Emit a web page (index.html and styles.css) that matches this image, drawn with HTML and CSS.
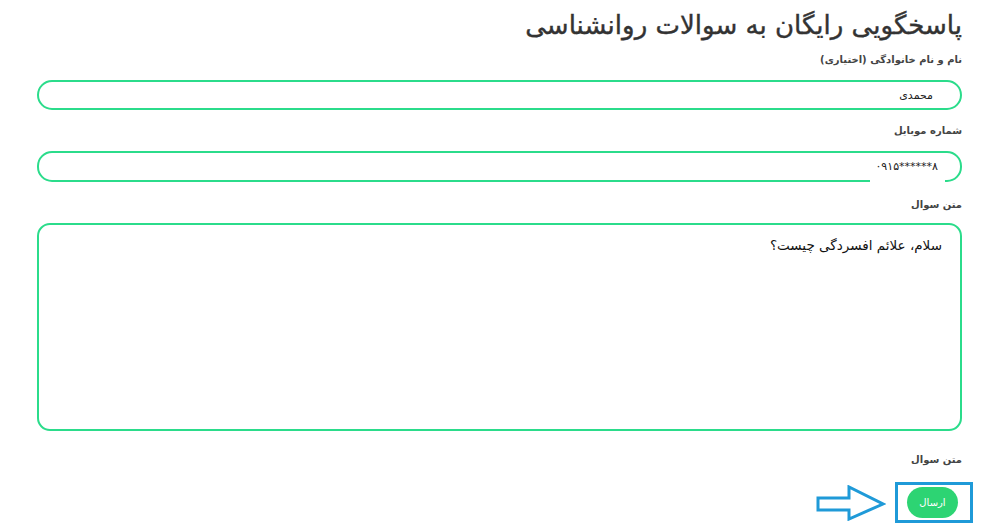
FILE: index.html
```html
<!DOCTYPE html>
<html lang="fa" dir="rtl">
<head>
<meta charset="utf-8">
<link rel="stylesheet" href="styles.css">
</head>
<body>
<form class="form">
  <h1 class="title">پاسخگویی رایگان به سوالات روانشناسی</h1>
  <label class="label">نام و نام خانوادگی (اختیاری)</label>
  <input class="field" type="text" value="محمدی">
  <label class="label label-gap">شماره موبایل</label>
  <div class="field-wrap">
    <input class="field field-tall field-ltr" type="text" dir="ltr" value="۰۹۱۵******۸">
    <span class="border-gap"></span>
  </div>
  <label class="label label-gap2">متن سوال</label>
  <textarea class="area">سلام، علائم افسردگی چیست؟</textarea>
  <label class="label label-gap3">متن سوال</label>
  <div class="actions">
    <div class="highlight"><button class="send" type="button">ارسال</button></div>
    <svg class="arrow" width="70" height="36" viewBox="0 0 70 36">
      <polygon points="2,13 33,13 33,2 67,19 33,34 33,25 2,25" fill="#fff" stroke="#1f9ad8" stroke-width="3" stroke-linejoin="miter"/>
    </svg>
  </div>
</form>
</body>
</html>
```

FILE: styles.css
```css
html, body {
  margin: 0;
  padding: 0;
  background: #fff;
}
body {
  font-family: "DejaVu Sans", "Liberation Sans", sans-serif;
  color: #333;
}
.form {
  display: flex;
  flex-direction: column;
  padding: 0 38px 0 37px;
}
.title {
  margin: 0;
  height: 50px;
  line-height: 50px;
  font-size: 26px;
  font-weight: 500;
  -webkit-text-stroke: 0.4px #333;
  color: #333;
  text-align: right;
}
.label {
  display: block;
  height: 20px;
  line-height: 20px;
  font-size: 10px;
  font-weight: bold;
  color: #444;
  margin-bottom: 10px;
}
.label-gap { margin-top: 11px; }
.label-gap2 { margin-top: 13px; margin-bottom: 8px; }
.label-gap3 { margin-top: 19px; margin-bottom: 12px; }
.field {
  box-sizing: border-box;
  display: block;
  width: 100%;
  height: 30px;
  margin: 0;
  border: 2px solid #2bdc8b;
  border-radius: 15px;
  padding: 0 27px;
  font-family: "DejaVu Sans", sans-serif;
  font-size: 11px;
  color: #222;
  background: #fff;
  outline: none;
  direction: rtl;
}
.field-wrap {
  position: relative;
}
.field-tall {
  height: 31px;
  padding: 0 22px;
}
.field-ltr {
  direction: ltr;
  text-align: right;
  letter-spacing: 1px;
}
.border-gap {
  position: absolute;
  bottom: 0;
  right: 17px;
  width: 75px;
  height: 3px;
  background: #fff;
}
.area {
  box-sizing: border-box;
  display: block;
  width: 100%;
  height: 208px;
  margin: 0;
  border: 2px solid #2bdc8b;
  border-radius: 13px;
  padding: 12px 18px;
  font-family: "DejaVu Sans", sans-serif;
  font-size: 13.5px;
  color: #111;
  resize: none;
  outline: none;
  direction: rtl;
}
.actions {
  display: flex;
  flex-direction: row;
  align-items: center;
  gap: 9px;
  margin-right: -11px;
}
.highlight {
  box-sizing: border-box;
  width: 78px;
  height: 41px;
  border: 3px solid #1f9ad8;
  padding: 2px 12px 2px 9px;
  display: flex;
  justify-content: center;
}
.send {
  width: 51px;
  height: 31px;
  border: none;
  border-radius: 16px;
  background: #2dd473;
  color: #fff;
  font-family: "DejaVu Sans", sans-serif;
  font-size: 10px;
  padding: 0;
}
.arrow {
  display: block;
}
```
